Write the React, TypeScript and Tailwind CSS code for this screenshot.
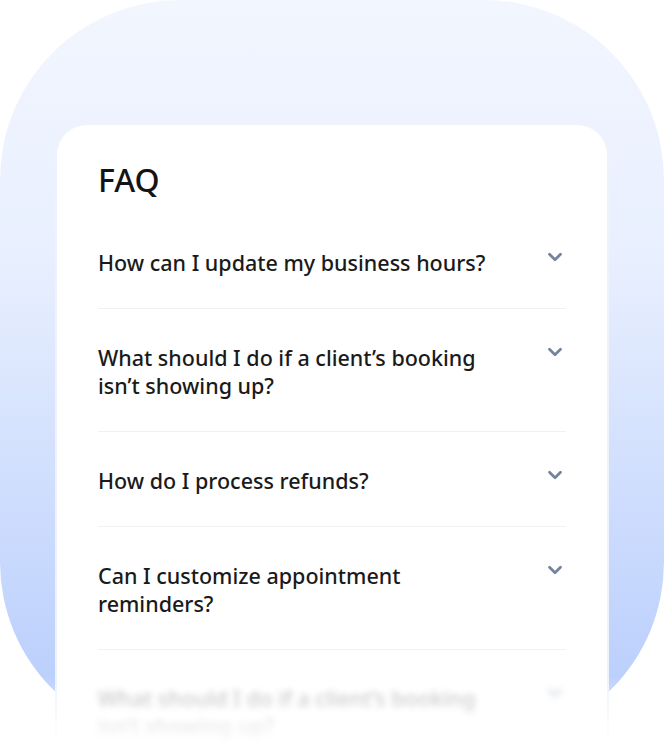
import { ChevronDown } from 'lucide-react';

const faqs = [
  'How can I update my business hours?',
  'What should I do if a client’s booking isn’t showing up?',
  'How do I process refunds?',
  'Can I customize appointment reminders?',
];

function FaqRow({ question, last }: { question: string; last?: boolean }) {
  return (
    <div className={`flex items-start justify-between gap-6 pt-[35px] pb-[31px] ${last ? '' : 'border-b border-[#f1f1f3]'}`}>
      <p className="max-w-[405px] text-[21.5px] leading-[28px] font-medium text-[#1a1a1a]">{question}</p>
      <ChevronDown className="mt-[-3px] h-[22px] w-[22px] shrink-0 text-[#74849c]" strokeWidth={3} />
    </div>
  );
}

export default function App() {
  return (
    <div
      className="relative h-[746px] w-[664px] overflow-hidden bg-white"
      style={{ fontFamily: '"Noto Sans", "Open Sans", sans-serif' }}
    >
      <div className="h-[742px] w-full rounded-[180px] bg-gradient-to-b from-[#f2f6fe] via-[#e8effe] via-35% to-[#b5cbfc] px-[55px] pt-[123px]">
        <div className="h-[700px] rounded-[32px] border-2 border-[#eef2f9] bg-white px-[41px] pt-[35px]">
          <h1 className="text-[32px] leading-[40px] font-medium text-[#141414]">FAQ</h1>
          <div className="mt-[14px]">
            {faqs.map((q) => (
              <FaqRow key={q} question={q} />
            ))}
            <div className="opacity-35 blur-[3px]">
              <FaqRow question="What should I do if a client’s booking isn’t showing up?" last />
            </div>
          </div>
        </div>
      </div>
      {/* fade out at the bottom */}
      <div className="pointer-events-none absolute inset-x-0 bottom-0 h-[70px] bg-gradient-to-b from-transparent to-white" />
    </div>
  );
}
